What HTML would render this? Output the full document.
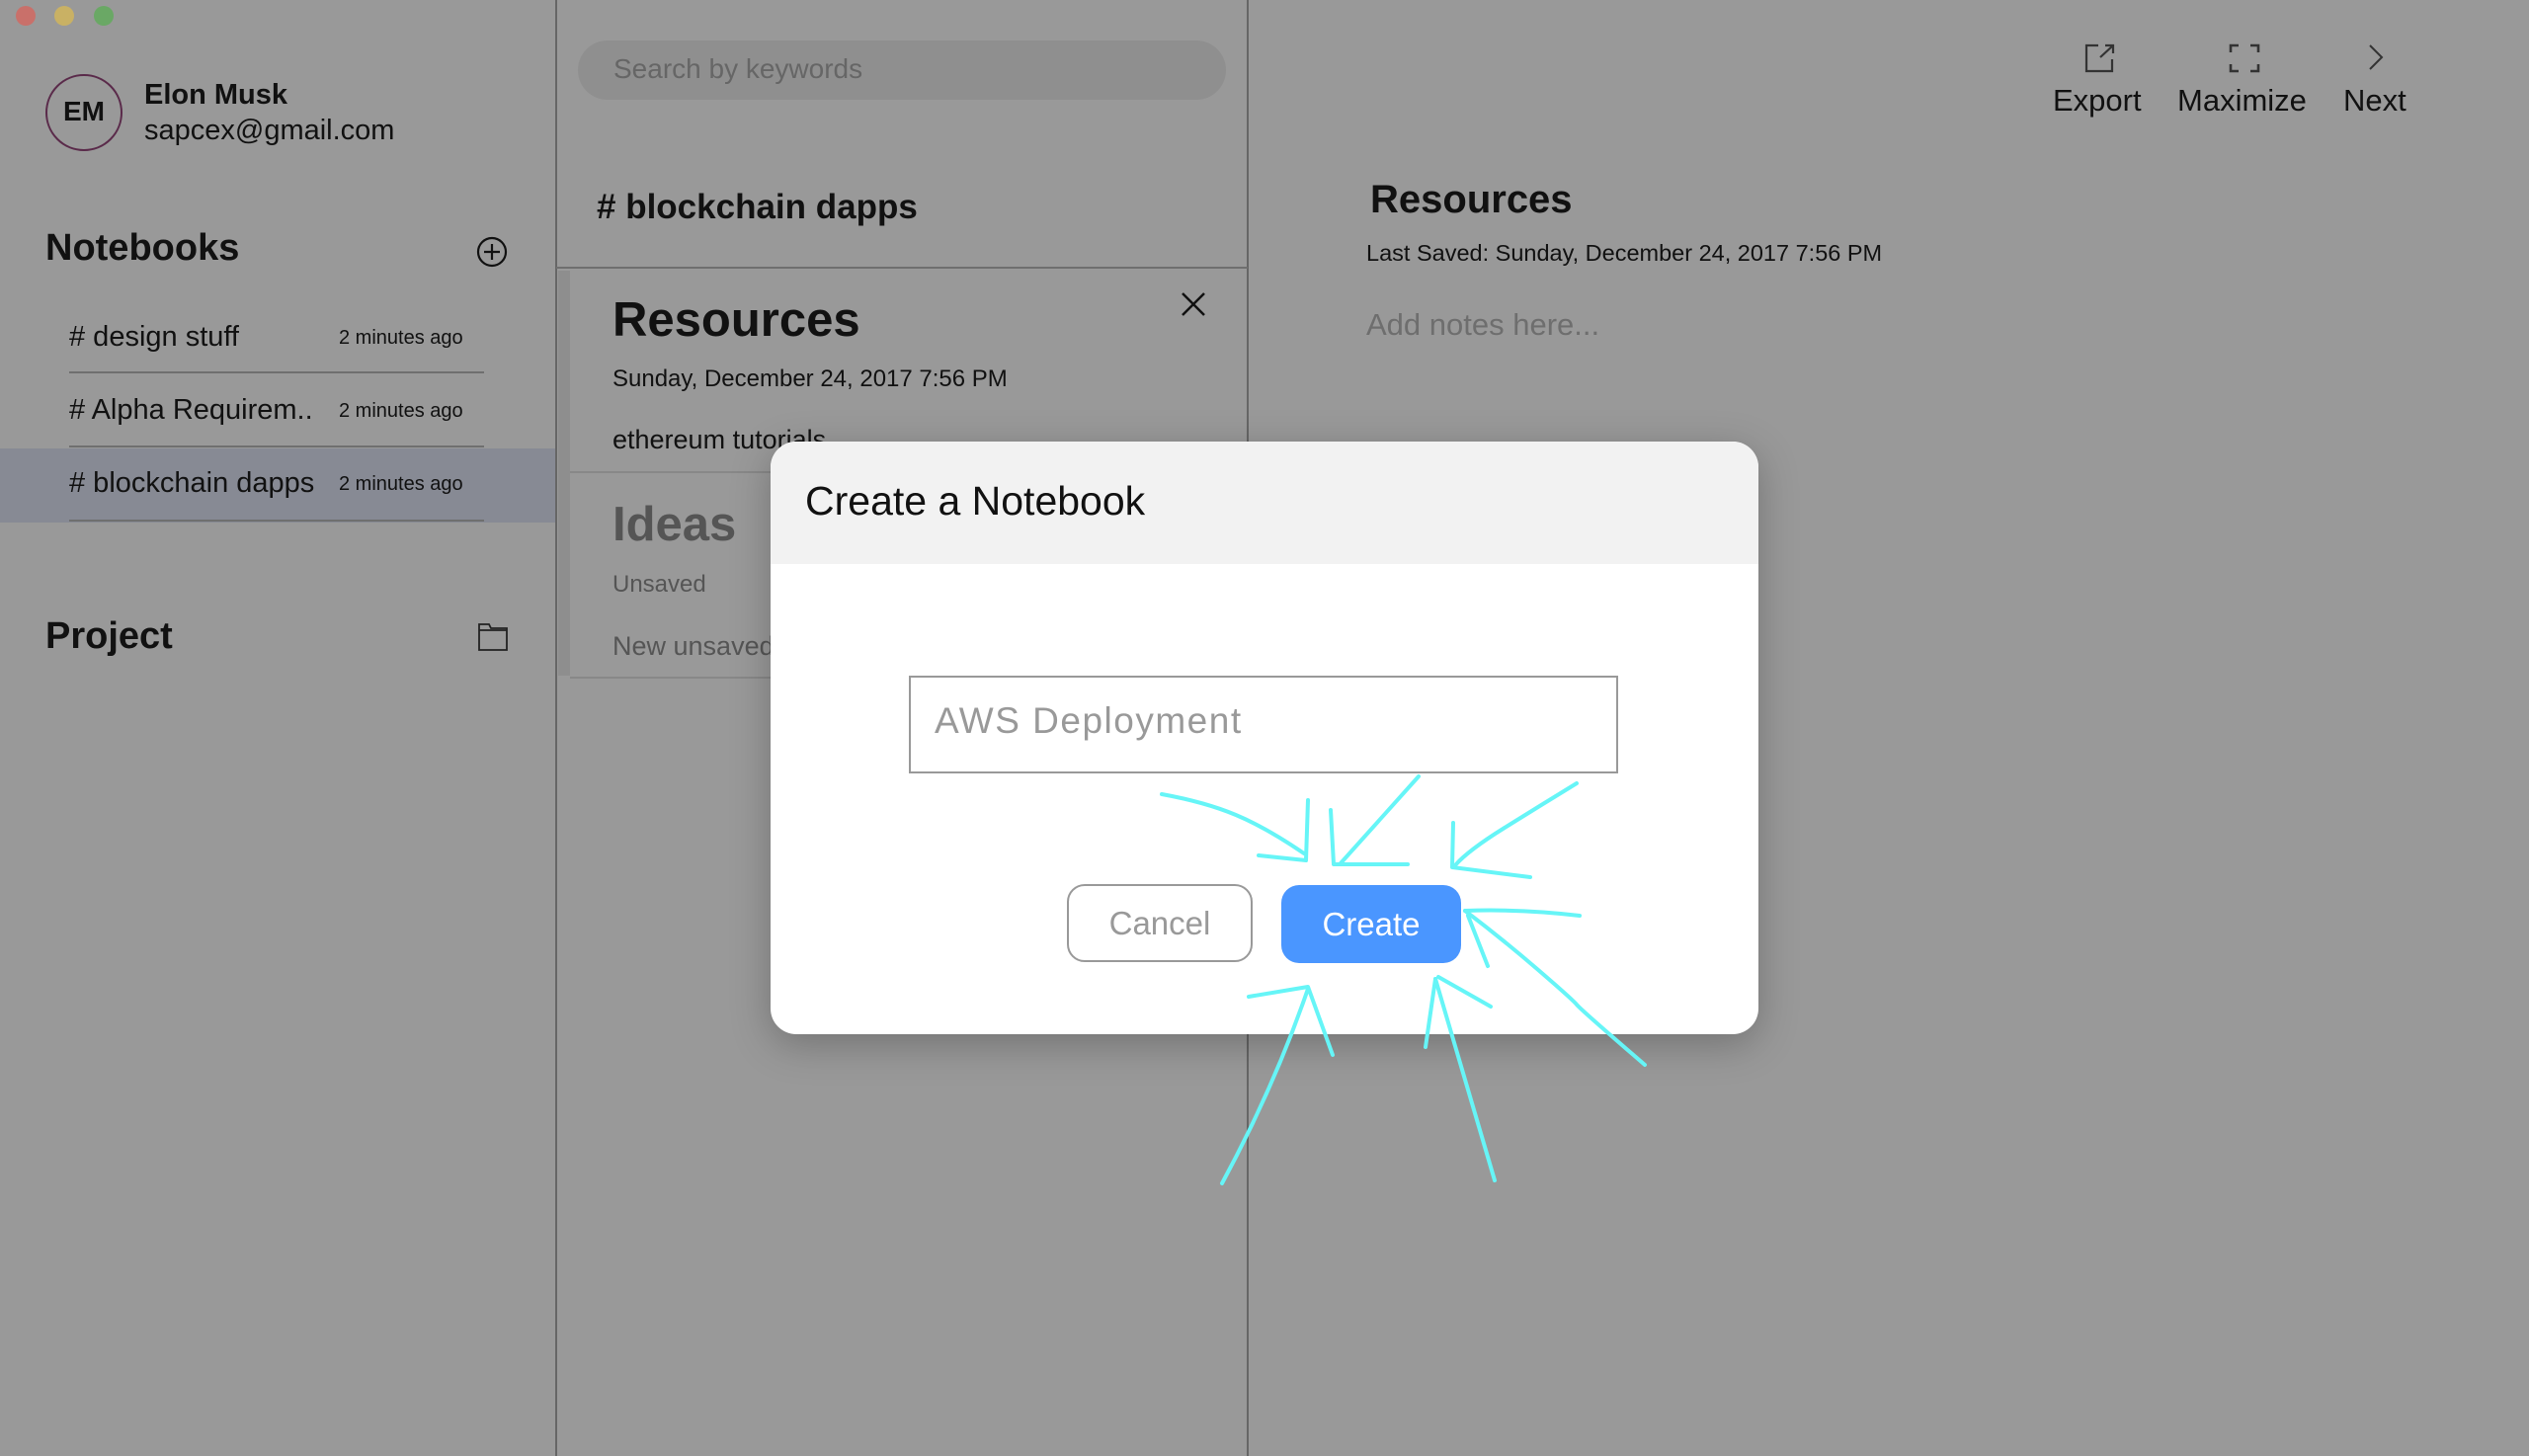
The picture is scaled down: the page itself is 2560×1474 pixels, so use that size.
<!DOCTYPE html>
<html><head><meta charset="utf-8"><style>
*{margin:0;padding:0;box-sizing:border-box}
body{width:2560px;height:1474px;background:#999;position:relative;overflow:hidden;font-family:"Liberation Sans",sans-serif;color:#111}
.a{position:absolute;white-space:nowrap}
.line{position:absolute;background:#6f6f6f}
</style></head><body>
<div class="a" style="left:16px;top:6px;width:20px;height:20px;border-radius:50%;background:#c9706a"></div>
<div class="a" style="left:55px;top:6px;width:20px;height:20px;border-radius:50%;background:#c9b164"></div>
<div class="a" style="left:95px;top:6px;width:20px;height:20px;border-radius:50%;background:#6aa865"></div>

<div class="a" style="left:46px;top:75px;width:78px;height:78px;border-radius:50%;border:2px solid #5a2a4a"></div>
<div class="a" style="left:46px;top:97px;width:78px;text-align:center;font-weight:bold;font-size:28px">EM</div>
<div class="a" style="left:146px;top:80px;font-weight:bold;font-size:29px">Elon Musk</div>
<div class="a" style="left:146px;top:116px;font-size:29px">sapcex@gmail.com</div>
<div class="a" style="left:46px;top:230px;font-weight:bold;font-size:38px">Notebooks</div>
<svg class="a" style="left:482px;top:239px" width="32" height="32" viewBox="0 0 32 32"><circle cx="16" cy="16" r="14" fill="none" stroke="#111" stroke-width="2.2"/><path d="M16 8v16M8 16h16" stroke="#111" stroke-width="2.2"/></svg>
<div class="a" style="left:0;top:454px;width:563px;height:75px;background:#878a94"></div>
<div class="a" style="left:70px;top:325px;font-size:29px"># design stuff</div>
<div class="a" style="left:343px;top:331px;font-size:20px">2 minutes ago</div>
<div class="line" style="left:70px;top:376px;width:420px;height:2px"></div>
<div class="a" style="left:70px;top:399px;font-size:29px"># Alpha Requirem..</div>
<div class="a" style="left:343px;top:405px;font-size:20px">2 minutes ago</div>
<div class="line" style="left:70px;top:451px;width:420px;height:2px"></div>
<div class="a" style="left:70px;top:473px;font-size:29px"># blockchain dapps</div>
<div class="a" style="left:343px;top:479px;font-size:20px">2 minutes ago</div>
<div class="line" style="left:70px;top:526px;width:420px;height:2px"></div>
<div class="a" style="left:46px;top:623px;font-weight:bold;font-size:38px">Project</div>
<svg class="a" style="left:483px;top:630px" width="32" height="30" viewBox="0 0 32 30"><path d="M2 2h10l2 4h16v22H2z M2 8h28" fill="none" stroke="#222" stroke-width="1.8"/></svg>

<div class="line" style="left:562px;top:0;width:2px;height:1474px;background:#666"></div>
<div class="line" style="left:1262px;top:0;width:2px;height:1474px;background:#666"></div>
<div class="a" style="left:585px;top:41px;width:656px;height:60px;border-radius:30px;background:#8f8f8f"></div>
<div class="a" style="left:621px;top:54px;font-size:28px;color:#666">Search by keywords</div>
<div class="a" style="left:604px;top:190px;font-weight:bold;font-size:35px"># blockchain dapps</div>
<div class="line" style="left:563px;top:270px;width:700px;height:2px"></div>
<div class="a" style="left:565px;top:274px;width:12px;height:410px;background:#8e8e8e"></div>
<div class="a" style="left:620px;top:296px;font-weight:bold;font-size:49px">Resources</div>
<svg class="a" style="left:1195px;top:295px" width="26" height="26" viewBox="0 0 26 26"><path d="M2 2L24 24M24 2L2 24" stroke="#111" stroke-width="2.5"/></svg>
<div class="a" style="left:620px;top:370px;font-size:24px">Sunday, December 24, 2017 7:56 PM</div>
<div class="a" style="left:620px;top:430px;font-size:27px">ethereum tutorials</div>
<div class="line" style="left:577px;top:477px;width:686px;height:2px;background:#888"></div>
<div class="a" style="left:620px;top:503px;font-weight:bold;font-size:49px;color:#555">Ideas</div>
<div class="a" style="left:620px;top:578px;font-size:24px;color:#555">Unsaved</div>
<div class="a" style="left:620px;top:639px;font-size:27px;color:#555">New unsaved</div>
<div class="line" style="left:577px;top:685px;width:686px;height:2px;background:#888"></div>

<svg class="a" style="left:2110px;top:44px" width="32" height="30" viewBox="0 0 32 30"><path d="M14 2H2v26h26V16 M16 14L29 2 M21 2h8v8" fill="none" stroke="#333" stroke-width="2.2"/></svg>
<svg class="a" style="left:2256px;top:44px" width="32" height="30" viewBox="0 0 32 30"><path d="M2 9V2h8 M22 2h8v7 M30 21v7h-8 M10 28H2v-7" fill="none" stroke="#333" stroke-width="2.6"/></svg>
<svg class="a" style="left:2396px;top:44px" width="18" height="28" viewBox="0 0 18 28"><path d="M3 2l12 12L3 26" fill="none" stroke="#333" stroke-width="2"/></svg>
<div class="a" style="left:2078px;top:84px;font-size:31px">Export</div>
<div class="a" style="left:2204px;top:84px;font-size:31px">Maximize</div>
<div class="a" style="left:2372px;top:84px;font-size:31px">Next</div>
<div class="a" style="left:1387px;top:180px;font-weight:bold;font-size:40px">Resources</div>
<div class="a" style="left:1383px;top:243px;font-size:23.5px">Last Saved: Sunday, December 24, 2017 7:56 PM</div>
<div class="a" style="left:1383px;top:311px;font-size:31px;color:#6e6e6e">Add notes here...</div>

<div class="a" style="left:780px;top:447px;width:1000px;height:600px;border-radius:26px;background:#fff;box-shadow:0 10px 40px rgba(0,0,0,0.25);overflow:hidden">
 <div style="height:124px;background:#f2f2f2"></div>
</div>
<div class="a" style="left:815px;top:484px;font-size:41px;color:#111">Create a Notebook</div>
<div class="a" style="left:920px;top:684px;width:718px;height:99px;border:2px solid #999;background:#fff"></div>
<div class="a" style="left:946px;top:709px;font-size:37px;color:#999;letter-spacing:1.5px">AWS Deployment</div>
<div class="a" style="left:1080px;top:895px;width:188px;height:79px;border:2px solid #999;border-radius:18px;background:#fff;text-align:center;line-height:75px;font-size:33px;color:#999">Cancel</div>
<div class="a" style="left:1297px;top:896px;width:182px;height:79px;border-radius:18px;background:#4a96ff;text-align:center;line-height:79px;font-size:33px;color:#fff">Create</div>

<svg class="a" style="left:0;top:0" width="2560" height="1474" viewBox="0 0 2560 1474" fill="none" stroke="#66f5f7" stroke-width="4" stroke-linecap="round" stroke-linejoin="round">
<path d="M1176 804Q1220 812 1251 825T1320 864"/><path d="M1324 810L1322 871L1274 866"/>
<path d="M1436 786L1357 874"/><path d="M1347 820L1350 875L1425 875"/>
<path d="M1596 793Q1560 815 1523 838T1473 876"/><path d="M1471 833L1470 878L1549 888"/>
<path d="M1599 927Q1540 920 1483 922"/><path d="M1483 922Q1520 950 1556 981T1596 1017T1665 1078"/><path d="M1486 927L1506 978"/>
<path d="M1513 1195L1453 991"/><path d="M1456 989L1509 1019"/><path d="M1453 991L1443 1060"/>
<path d="M1237 1198Q1290 1100 1324 1001"/><path d="M1264 1009L1324 999L1349 1068"/>
</svg>
</body></html>
